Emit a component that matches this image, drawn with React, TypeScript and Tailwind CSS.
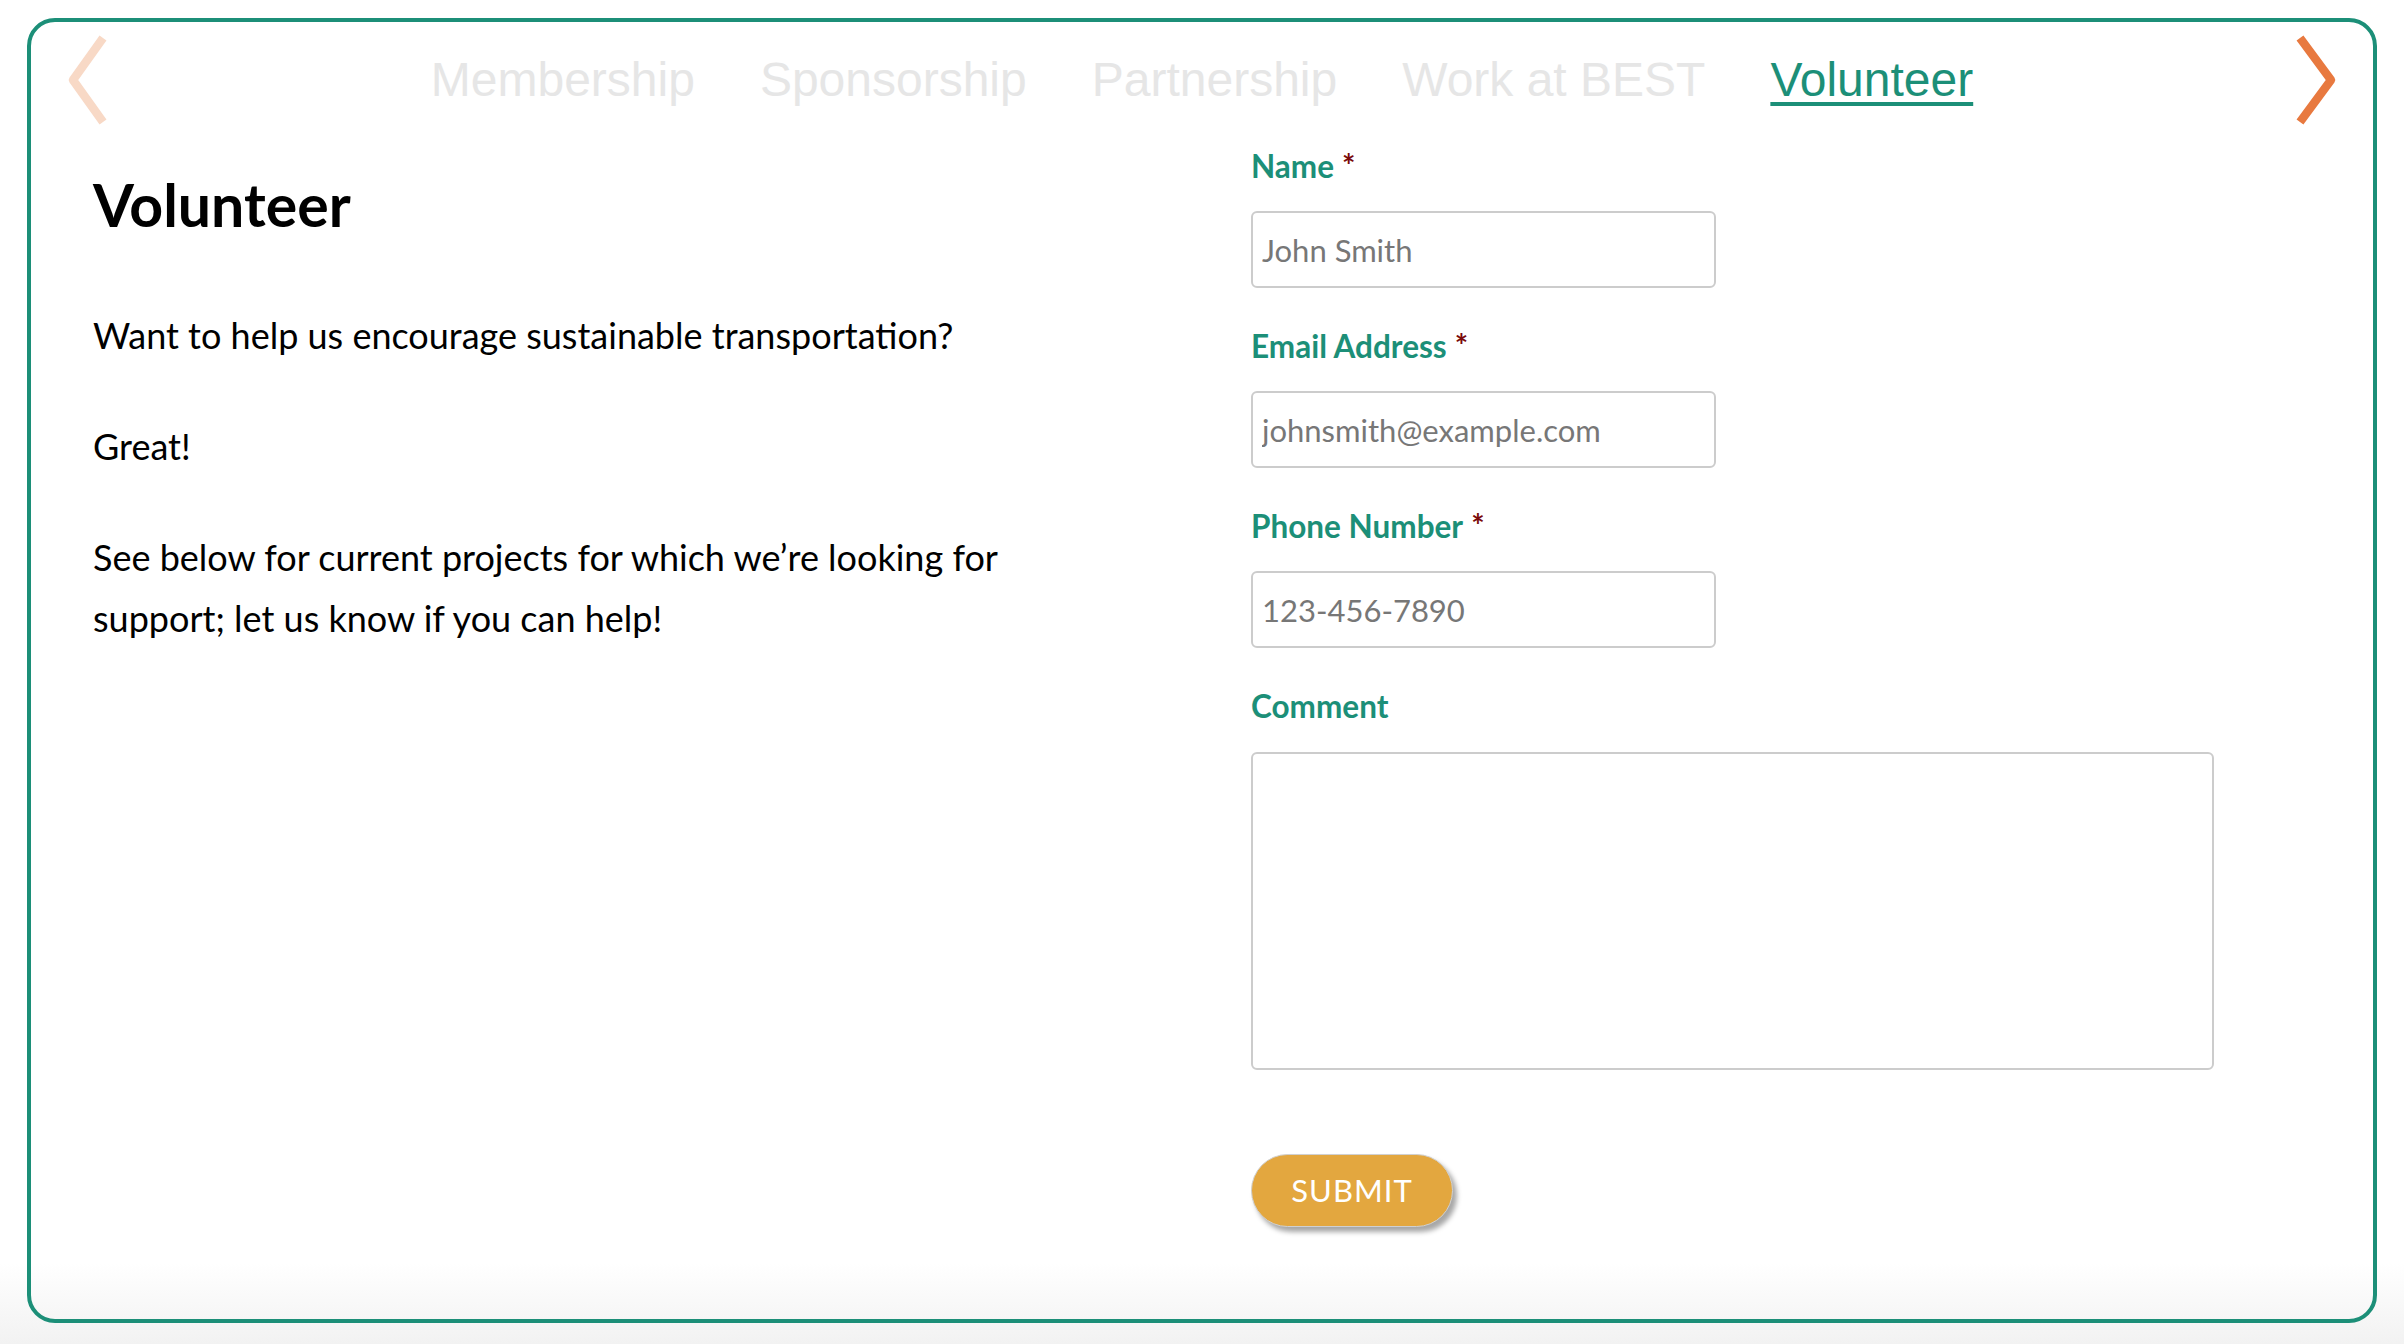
import { useState } from "react";

const tabs = ["Membership", "Sponsorship", "Partnership", "Work at BEST", "Volunteer"];

function Chevron({ dir, color }: { dir: "left" | "right"; color: string }) {
  const pts = dir === "left" ? "36,3 6,45 36,87" : "5,3 36,45 5,87";
  return (
    <svg width="42" height="90" viewBox="0 0 42 90" fill="none">
      <polyline points={pts} stroke={color} strokeWidth="8.5" strokeLinejoin="round" />
    </svg>
  );
}

function Field({
  label,
  required,
  placeholder,
}: {
  label: string;
  required?: boolean;
  placeholder: string;
}) {
  return (
    <div className="mb-[40px]">
      <label className="block text-[31.5px] leading-[36px] font-bold text-[#1c8f78]">
        {label}
        {required && <span className="ml-[8px] text-[#7a0a0a]">*</span>}
      </label>
      <input
        placeholder={placeholder}
        className="mt-[27px] block h-[77px] w-[465px] rounded-[6px] border-2 border-[#cccccc] bg-white px-[9px] text-[31px] text-[#333] outline-none placeholder:text-[#777]"
      />
    </div>
  );
}

export default function App() {
  const [active] = useState("Volunteer");

  return (
    <div className="min-h-screen bg-[linear-gradient(to_bottom,#ffffff_94%,#f2f2f2_100%)] pt-[18px] font-['Lato',sans-serif] text-black">
      <div className="mx-[27px] h-[1305px] rounded-[28px] border-4 border-[#1c8f78]">
        {/* tab row */}
        <div className="flex h-[116px] items-center px-[36px]">
          <Chevron dir="left" color="#f8d9c6" />
          <nav className="flex flex-1 justify-center gap-[65px] font-['Liberation_Sans',Arial,sans-serif] text-[48px] leading-none">
            {tabs.map((t) =>
              t === active ? (
                <a
                  key={t}
                  href="#"
                  className="text-[#1c8f78] underline decoration-[4px] underline-offset-[6px]"
                >
                  {t}
                </a>
              ) : (
                <a key={t} href="#" className="text-[#e6e6e6]">
                  {t}
                </a>
              )
            )}
          </nav>
          <Chevron dir="right" color="#e8793f" />
        </div>

        <div className="flex pl-[62px]">
          {/* left column */}
          <div className="w-[1158px] pt-[33px]">
            <h1 className="text-[59px] leading-[68px] font-bold">Volunteer</h1>
            <div className="mt-[66px] max-w-[1000px] space-y-[50px] text-[36px] leading-[61px]">
              <p>Want to help us encourage sustainable transportation?</p>
              <p>Great!</p>
              <p>
                See below for current projects for which we’re looking for support; let us know if
                you can help!
              </p>
            </div>
          </div>

          {/* form */}
          <form className="flex-1 pt-[10px]" onSubmit={(e) => e.preventDefault()}>
            <Field label="Name" required placeholder="John Smith" />
            <Field label="Email Address" required placeholder="johnsmith@example.com" />
            <Field label="Phone Number" required placeholder="123-456-7890" />
            <div>
              <label className="block text-[31.5px] leading-[36px] font-bold text-[#1c8f78]">
                Comment
              </label>
              <textarea className="mt-[28px] block h-[318px] w-[963px] resize-none rounded-[6px] border-2 border-[#cccccc] bg-white p-[10px] text-[31px] outline-none" />
            </div>
            <button
              type="submit"
              className="mt-[84px] h-[73px] w-[202px] rounded-full border border-[#d0d0d0] bg-[#e3a73f] text-[31px] tracking-[1px] text-white shadow-[4px_5px_5px_rgba(0,0,0,0.35)]"
            >
              SUBMIT
            </button>
          </form>
        </div>
      </div>
    </div>
  );
}
